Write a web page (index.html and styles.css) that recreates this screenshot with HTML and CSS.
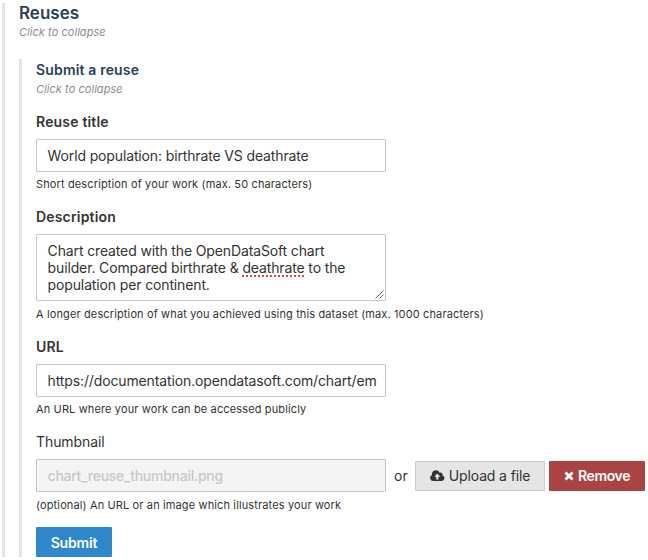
FILE: index.html
```html
<!DOCTYPE html>
<html lang="en">
<head>
<meta charset="utf-8">
<title>Reuses</title>
<link rel="stylesheet" href="styles.css">
</head>
<body>
<section class="panel">
  <h2 class="panel-title"><span>Reuses</span></h2>
  <p class="collapse"><span>Click to collapse</span></p>
  <section class="form">
    <h3 class="form-title"><span>Submit a reuse</span></h3>
    <p class="collapse"><span>Click to collapse</span></p>

    <div class="field first">
      <div class="label"><span>Reuse title</span></div>
      <div class="control"><span class="value">World population: birthrate VS deathrate</span></div>
      <p class="help"><span>Short description of your work (max. 50 characters)</span></p>
    </div>

    <div class="field tall">
      <div class="label"><span>Description</span></div>
      <div class="control area">
        <span class="value">Chart created with the OpenDataSoft chart<br>builder. Compared birthrate &amp; <span class="typo">deathrate</span> to the<br>population per continent.</span>
        <svg class="grip" width="9" height="9" viewBox="0 0 9 9"><path d="M.5 8.500l8-8M4.500 8.500l4-4" stroke="#555" stroke-width=".9"/></svg>
      </div>
      <p class="help low"><span>A longer description of what you achieved using this dataset (max. 1000 characters)</span></p>
    </div>

    <div class="field">
      <div class="label"><span>URL</span></div>
      <div class="control"><span class="value url">https://documentation.opendatasoft.com/chart/em</span></div>
      <p class="help"><span>An URL where your work can be accessed publicly</span></p>
    </div>

    <div class="field">
      <div class="label plain"><span>Thumbnail</span></div>
      <div class="row">
        <div class="control disabled"><span class="value">chart_reuse_thumbnail.png</span></div>
        <span class="or">or</span>
        <div class="btn upload">
          <svg width="15" height="12" viewBox="0 0 15 12"><path fill="#333" fill-rule="evenodd" d="M3.300 11A3.200 3.200 0 0 1 2 4.900 4 4 0 0 1 9.600 2.700a2 2 0 0 1 2.800 2.500A3 3 0 0 1 12 11zM7.300 3.600L4.200 6.700h2v2.700h2.200V6.700h2z"/></svg>
          <span>Upload a file</span>
        </div>
        <div class="btn remove">
          <svg width="10" height="10" viewBox="0 0 10 10"><path d="M1.500 1.500l7 7M8.500 1.500l-7 7" stroke="#fff" stroke-width="2.800"/></svg>
          <span>Remove</span>
        </div>
      </div>
      <p class="help low"><span>(optional) An URL or an image which illustrates your work</span></p>
    </div>
    <div class="btn submit"><span>Submit</span></div>
  </section>
</section>
</body>
</html>
```
FILE: styles.css
```css
* { box-sizing: border-box; }
body {
  margin: 0;
  background: #fff;
  color: #333;
  font: 14px/17px Inter, "Liberation Sans", sans-serif;
  overflow: hidden;
}
h2, h3, p { margin: 0; }
.panel {
  margin: 3px 0 0 2px;
  padding-left: 14px;
  border-left: 3px solid #e5e5e5;
  height: 554px;
}
.panel-title { font-size: 17px; line-height: 20px; font-weight: 600; color: #2c3f56; }
.collapse { font-size: 11px; line-height: 18px; font-style: italic; color: #8c8c8c; letter-spacing: .05px; }
.form {
  margin-top: 18px;
  padding-left: 14px;
  border-left: 3px solid #e5e5e5;
  height: 498px;
}
.form-title { font-size: 14px; line-height: 22px; font-weight: 600; color: #2c3f56; letter-spacing: .17px; }
.form .collapse { line-height: 17px; }
.field { height: 95px; padding-top: 11px; }
.field.first { margin-top: 3px; }
.field.tall { height: 130px; }
.label { height: 27px; line-height: 20px; font-weight: 600; letter-spacing: .18px; }
.label.plain { font-weight: 400; letter-spacing: -.08px; }
.control {
  position: relative;
  width: 350px;
  height: 33px;
  padding: 7px 10px 7px 10.6px;
  border: 1px solid #c6c6c6;
  border-radius: 1px;
  white-space: nowrap;
}
.value { display: block; line-height: 17px; letter-spacing: -.135px; }
.url { letter-spacing: -.13px; }
.area { height: 67px; }
.typo { text-decoration: underline dotted #e8434a 2px; text-underline-offset: 2px; text-decoration-skip-ink: none; }
.grip { position: absolute; right: 1px; bottom: 1px; fill: none; }
.help { font-size: 11px; line-height: 24px; height: 24px; letter-spacing: .13px; }
.help.low { line-height: 26px; }
.row { display: flex; align-items: center; }
.disabled { background: #f4f4f4; color: #c8c8c8; flex: none; }
.disabled .value { font-weight: 500; letter-spacing: -.27px; }
.or { width: 29px; padding-left: 8px; }
.btn {
  display: flex;
  align-items: center;
  justify-content: center;
  height: 30px;
  border-radius: 1px;
  white-space: nowrap;
}
.upload { width: 130px; gap: 4px; border: 1px solid #ccc; background: #e5e5e5; margin-right: 4px; letter-spacing: -.13px; }
.remove { width: 96px; gap: 4px; background: #a94442; color: #fff; font-weight: 600; letter-spacing: -.35px; }
.submit { width: 76px; margin-top: 11px; background: #2f88cc; color: #fff; font-weight: 600; letter-spacing: -.15px; }
```
